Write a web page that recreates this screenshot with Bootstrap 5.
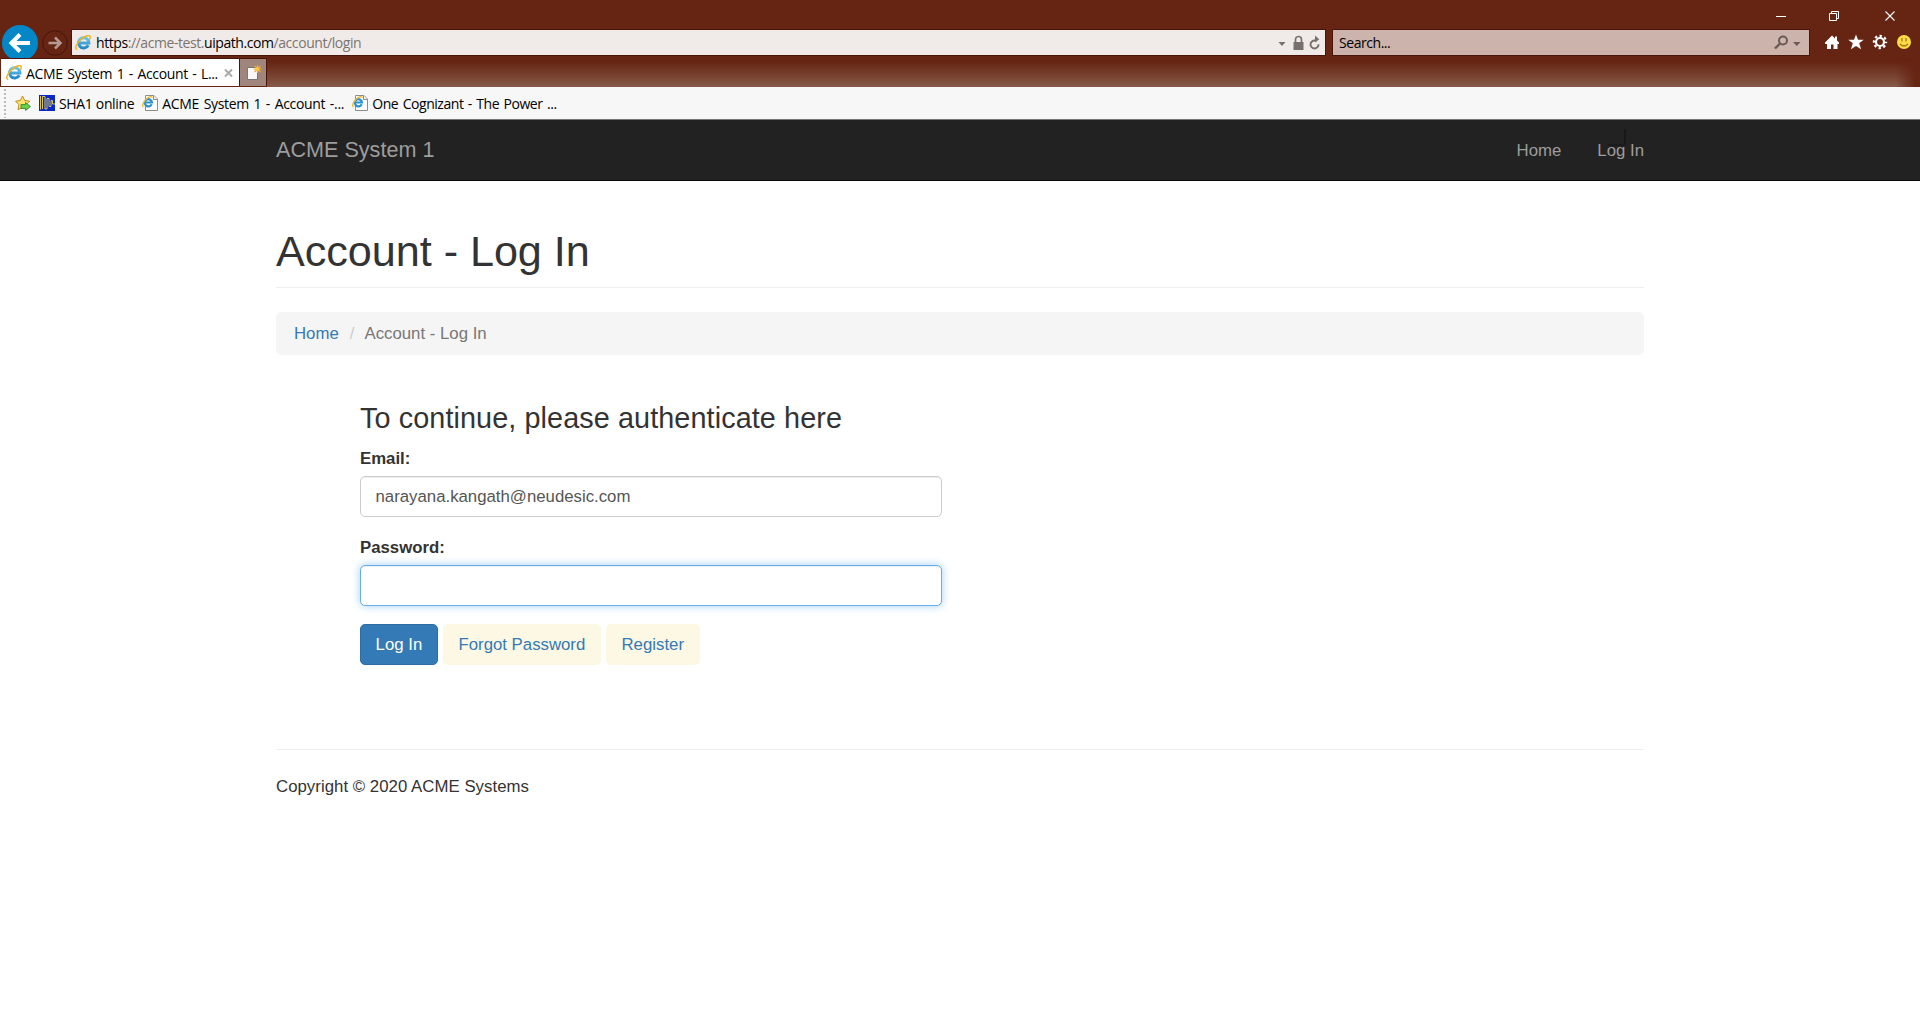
<!DOCTYPE html>
<html lang="en">
<head>
<meta charset="utf-8">
<meta name="viewport" content="width=device-width, initial-scale=1">
<title>ACME System 1 - Account - Log In</title>
<link href="https://cdn.jsdelivr.net/npm/bootstrap@5.3.0/dist/css/bootstrap.min.css" rel="stylesheet">
<style>
body{font-family:"Liberation Sans",Arial,sans-serif;font-size:16.8px;line-height:24px;color:#333;background:#fff;overflow:hidden}
svg{display:block;flex:none}
a{text-decoration:none;color:#337ab7}
.chrome{background:#662412;height:87px;font-family:"Open Sans","Noto Sans",sans-serif;font-size:14px;line-height:20px;color:#000;position:relative}
.titlebar{height:29px;padding:8px 21px 0 0;gap:46px}
.toolrow{height:29px;padding-left:2px}
.backbtn{margin-top:-4px;height:33px;width:36px;overflow:hidden}
.boxed{height:27px;border:1px solid #4a1509;white-space:nowrap}
.addr{width:1255px;margin-left:1px;background:#f0ebe8;padding:0 3px 0 3px}
.find{width:478px;margin-left:6px;background:#ccb3ab;padding:0 7px 0 6px}
.dim{color:#7b7471}
.tabrow{height:29px}
.tabrow::after{content:"";flex:1;background:linear-gradient(#662412 12%,#845746 95%);-webkit-mask-image:linear-gradient(to left,transparent 4px,#000 24px)}
.pagetab{width:238px;margin-left:1px;background:#fff;border-top:1px solid #4a1509;padding:0 6px 0 5px;height:28px;white-space:nowrap}
.newtab{width:28px;height:28px;background:#9f857b;border:1px solid #4a1509;border-bottom:0}
.chrome-edge{border-bottom:1px solid #662412}
.favbar{height:33px;background:#f7f7f7;border-bottom:1px solid #767676;font-family:"Open Sans","Noto Sans",sans-serif;font-size:14px;line-height:20px;color:#000;white-space:nowrap;padding-left:4px}
.grip{width:2px;height:29px;background:repeating-linear-gradient(#bbb 0 2px,transparent 2px 4px)}
.fit{display:inline-block;white-space:nowrap}
.w-url{letter-spacing:-.43px}
.w-tab{letter-spacing:-.35px;word-spacing:1.2px;position:relative;top:1px}
.w-find{letter-spacing:-.45px;padding-top:1px}
.w-fav{letter-spacing:-.3px;position:relative;top:1px}
.fav-a{letter-spacing:-.34px}
.fav-b{letter-spacing:-.32px;word-spacing:1.300px;width:181px}
.fav-c{letter-spacing:-.45px;word-spacing:1.200px}
.sitebar{height:61px;background:#222;border-bottom:1px solid #080808;padding:0;position:relative}
.wrap{width:1368px;margin:0 auto}
.sitebar .navbar-brand{font-size:21.6px;color:#9d9d9d;margin:0;padding:0;line-height:24px}
.sitebar .nav-link{color:#9d9d9d;padding:2px 0 0!important;line-height:24px}
.sitebar .navbar-nav{gap:36px}
.corner-mark{position:absolute;left:1608px;top:9px;width:18px;height:17px;border-right:2px solid #181818;border-bottom:2px solid #1b1b1b}
.titleblock{padding-top:46px;height:107px;border-bottom:1px solid #eee}
.titleblock h1{font-size:43.2px;line-height:48px;margin:0;font-weight:400;letter-spacing:-.05px}
.crumbs{margin-top:24px;height:43px;background:#f5f5f5;border-radius:5px;padding:0 18px}
.crumbs .breadcrumb-item+.breadcrumb-item{padding-left:11px;color:#777}
.crumbs .breadcrumb-item+.breadcrumb-item::before{color:#ccc;padding-right:10px}
.loginform{margin:0 0 0 84px;width:582px;padding-top:47px;height:394px}
.loginform h3{font-size:28.8px;line-height:32px;margin:0 0 13px;font-weight:400;letter-spacing:.09px}
.loginform label{font-weight:700;line-height:24px;margin:0 0 5px;display:block}
.loginform .form-control{height:41px;border:1px solid #ccc;border-radius:5px;font-size:16.8px;color:#555;padding:0 14.5px;box-shadow:inset 0 1px 1px rgba(0,0,0,.075);margin-bottom:19px}
.loginform .form-control.active-field{border-color:#66afe9;box-shadow:inset 0 1px 1px rgba(0,0,0,.075),0 0 9px rgba(102,175,233,.6);margin-bottom:18px}
.loginform .btn{height:41px;padding:0 14.6px;border:1px solid transparent;border-radius:5px;font-size:16.8px;line-height:39px}
.loginform .btn-go{background:#337ab7;border-color:#2e6da4;color:#fff}
.loginform .btn-soft{background:#fcf8e3;color:#337ab7}
.btnline{gap:5px}
.foot{border-top:1px solid #eee;padding-top:25px;letter-spacing:.03px}
.righttools{padding:4px 8px 0 0;gap:8px}
</style>
<script src="https://cdn.jsdelivr.net/npm/bootstrap@5.3.0/dist/js/bootstrap.bundle.min.js"></script>
</head>
<body>
<svg width="0" height="0" class="position-absolute">
<defs>
<linearGradient id="blu" x1="0" y1="0" x2="0" y2="1"><stop offset="0" stop-color="#69c6ee"/><stop offset="1" stop-color="#2387c8"/></linearGradient>
<symbol id="ie" viewBox="0 0 16 16">
<path d="M13.300 10.300a5.200 5.200 0 1 1 .6-2.300H4.600" fill="none" stroke="url(#blu)" stroke-width="3"/>
<path d="M2.200 14.600C-.8 13.600 1.600 8.200 5.400 4.700 9.300 1.100 14.400-.7 15.100 1.500c.3.900-.1 2-.7 3.100" fill="none" stroke="#f1b51c" stroke-width="1.500"/>
</symbol>
<symbol id="iepage" viewBox="0 0 16 16">
<path d="M3.500.5h8.500l3.500 3.500v11.500h-12z" fill="#fff" stroke="#8d8d8d"/><path d="M11.500.5v4h4" fill="#eee" stroke="#8d8d8d"/>
<path d="M9.700 9.300a3.600 3.600 0 1 1 .3-1.800H3.300" fill="none" stroke="#2b93d4" stroke-width="2.200"/>
<path d="M1.200 12C-.6 10 3 4.200 6.500 2.400c2-1 3.600-.9 3.800.3" fill="none" stroke="#efb925" stroke-width="1.300"/>
</symbol>
</defs></svg>

<header class="chrome chrome-edge">
  <div class="titlebar d-flex justify-content-end align-items-start">
    <svg width="10" height="16"><path d="M0 8.500h10" stroke="#fff"/></svg>
    <svg width="10" height="16" style="margin-left:-3px"><path d="M.5 5.500h7v7h-7zM2.500 5v-1.500h7v7H8" fill="none" stroke="#fff"/></svg>
    <svg width="10" height="16" class="me-1"><path d="M.5 3.500l9 9m0-9l-9 9" stroke="#fff" stroke-width="1.100"/></svg>
  </div>
  <div class="toolrow d-flex align-items-start">
    <div class="backbtn"><svg width="36" height="36"><circle cx="18" cy="18" r="18" fill="#0487c7"/><path d="M28 18H10m8-8.500L9.500 18l8.500 8.500" fill="none" stroke="#fff" stroke-width="4"/></svg></div>
    <svg width="28" height="28" class="ms-1"><circle cx="13" cy="14" r="12.300" fill="#662412" stroke="#47150a"/><path d="M6.500 14h12M13 8.500l5.500 5.500-5.500 5.500" fill="none" stroke="#b39a93" stroke-width="2.500"/></svg>
    <div class="addr boxed d-flex align-items-center">
      <svg width="16" height="16"><use href="#ie"/></svg>
      <span class="fit w-url me-auto" style="margin-left:5px">https<span class="dim">://acme-test.</span>uipath.com<span class="dim">/account/login</span></span>
      <svg width="46" height="18"><path d="M2.500 8h7L6 12z" fill="#77706d"/><path d="M17.500 8h10v8h-10z" fill="#77706d"/><path d="M19.500 8.500V5.500a3 3 0 0 1 6 0v3" fill="none" stroke="#77706d" stroke-width="1.700"/><path d="M41.500 9.200a4 4 0 1 1-3.500-3.700h1.500" fill="none" stroke="#77706d" stroke-width="1.900" transform="translate(1 1)"/><path d="M39 1.500v7l4.300-3.300z" fill="#77706d"/></svg>
    </div>
    <div class="find boxed d-flex align-items-center">
      <span class="w-find me-auto">Search...</span>
      <svg width="29" height="18"><circle cx="10" cy="6.500" r="4" fill="none" stroke="#6b5a54" stroke-width="2"/><path d="M7 9.500L2 14.500" stroke="#6b5a54" stroke-width="2.400"/><path d="M20 8h7.500L23.700 12z" fill="#6b5a54"/></svg>
    </div>
    <div class="righttools d-flex ms-auto">
      <svg width="16" height="18"><path d="M8 2.500L1 9.500V11h2v5h4v-4.500h2.500V16H13.500v-5H15V9.500l-2-2V3.500h-2v2z" fill="#fff"/></svg>
      <svg width="16" height="18"><path d="M8 1.500l2 5.200h5.700l-4.500 3.600 1.900 6L8 12.900l-5.100 3.400 1.900-6L.3 6.700H6z" fill="#fff"/></svg>
      <svg width="16" height="18"><circle cx="8" cy="9" r="4" fill="none" stroke="#fff" stroke-width="2.200"/><circle cx="8" cy="9" r="6.100" fill="none" stroke="#fff" stroke-width="2.200" stroke-dasharray="2.400 2.390" stroke-dashoffset="1.200"/></svg>
      <svg width="16" height="18"><circle cx="8" cy="9" r="7" fill="#ffdb45"/><path d="M6 5v3.500m4-3.500v3.500M4 11q4 4 8 0" fill="none" stroke="#a07918" stroke-width="1.300"/></svg>
    </div>
  </div>
  <div class="tabrow d-flex">
    <div class="pagetab d-flex align-items-center">
      <svg width="16" height="16"><use href="#ie"/></svg>
      <span class="fit w-tab ms-1 me-auto">ACME System 1 - Account - L...</span>
      <svg width="9" height="10"><path d="M1 1.500l7 7m0-7l-7 7" stroke="#a9a9a9" stroke-width="2"/></svg>
    </div>
    <div class="newtab d-flex align-items-center"><svg width="25" height="26"><path d="M7.500 7.500h10v12h-10z" fill="#f8f8f8" stroke="#777"/><path d="M17.500 5v8M13.500 9h8M14.500 6l6 6m0-6l-6 6" stroke="#f5a81c" stroke-width="1.200"/><circle cx="17.500" cy="9" r="2" fill="#ffc44a"/></svg></div>
  </div>
</header>
<div class="favbar d-flex align-items-center">
  <div class="grip"></div>
  <svg width="17" height="16" style="margin-left:9px"><path d="M7.500 1l2.200 4.500 5 .7-3.600 3.500.8 5-4.400-2.400-4.500 2.400.9-5L.6 6.200l4.800-.7z" fill="#ffe370" stroke="#bf8a18"/><path d="M6 9.500h4.500V7.500l5 4-5 4v-2H6z" fill="#65cf48" stroke="#27882a" stroke-width=".8"/></svg>
  <svg width="16" height="16" style="margin-left:7px"><path d="M0 0h16v16H0z" fill="#0a28c8"/><path d="M1.500 1v13.500M3.500 14V1.500h2.500V14h2V3.500h2v8h2v-6h1.500V9H16" fill="none" stroke="#d8c65a"/></svg>
  <span class="fit w-fav fav-a ms-1">SHA1 online</span>
  <svg width="16" height="16" class="ms-2"><use href="#iepage"/></svg>
  <span class="fit w-fav fav-b ms-1">ACME System 1 - Account -...</span>
  <svg width="16" height="16" style="margin-left:9px"><use href="#iepage"/></svg>
  <span class="fit w-fav fav-c ms-1">One Cognizant - The Power ...</span>
</div>

<nav class="sitebar navbar navbar-expand">
  <div class="corner-mark"></div>
  <div class="wrap d-flex align-items-center justify-content-between position-relative">
    <a class="navbar-brand" href="#">ACME System 1</a>
    <ul class="navbar-nav"><li class="nav-item"><a class="nav-link" href="#">Home</a></li><li class="nav-item"><a class="nav-link" href="#">Log In</a></li></ul>
  </div>
</nav>
<main class="wrap">
  <div class="titleblock"><h1>Account - Log In</h1></div>
  <ol class="crumbs breadcrumb align-items-center mb-0"><li class="breadcrumb-item"><a href="#">Home</a></li><li class="breadcrumb-item">Account - Log In</li></ol>
  <form class="loginform">
    <h3>To continue, please authenticate here</h3>
    <label for="email">Email:</label>
    <input id="email" class="form-control" type="text" value="narayana.kangath@neudesic.com">
    <label for="pw">Password:</label>
    <input id="pw" class="form-control active-field" type="password">
    <div class="btnline d-flex"><button type="button" class="btn btn-go">Log In</button><button type="button" class="btn btn-soft">Forgot Password</button><button type="button" class="btn btn-soft">Register</button></div>
  </form>
  <footer class="foot">Copyright © 2020 ACME Systems</footer>
</main>
</body>
</html>
